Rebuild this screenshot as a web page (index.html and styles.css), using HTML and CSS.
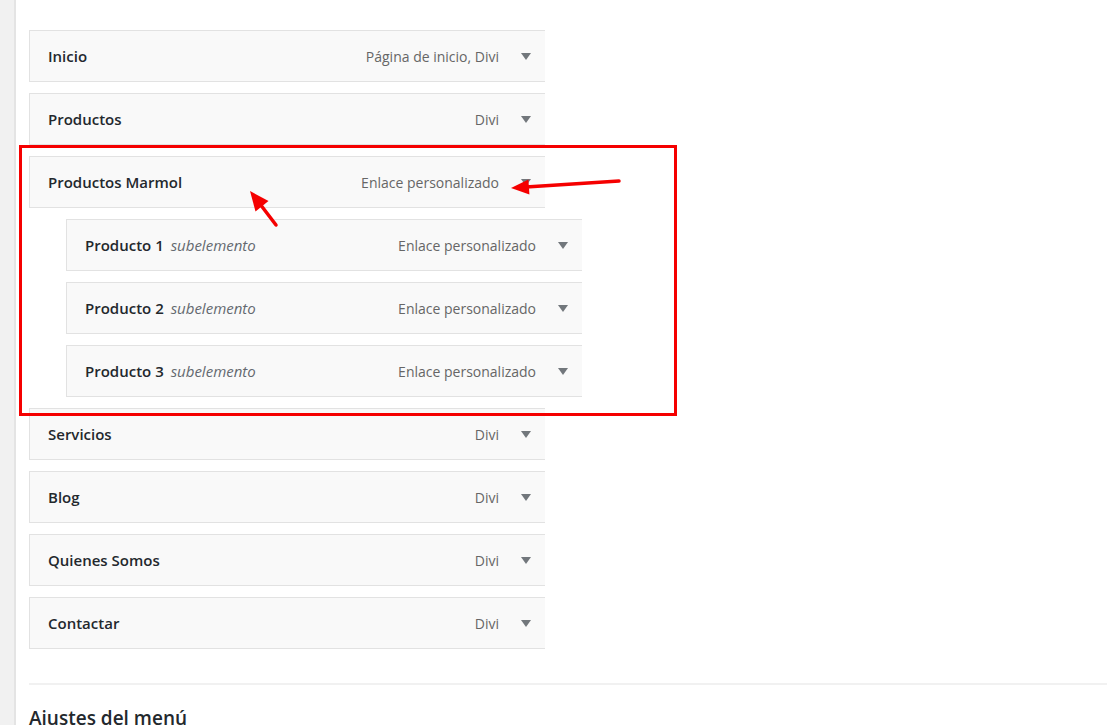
FILE: index.html
```html
<!DOCTYPE html>
<html lang="es">
<head>
  <meta charset="UTF-8" />
  <title>Menús</title>
  <link rel="stylesheet" href="styles.css">
</head>
<body>

  <div class="page">
    <!-- Admin side strip -->
    <div class="strip"></div>

    <!-- Menu structure -->
    <div class="main">
      <ul class="menu">
        <li class="item">
          <span class="title">Inicio</span>
          <span class="controls"><span class="type">Página de inicio, Divi</span><span class="caret"></span></span>
        </li>
        <li class="item">
          <span class="title">Productos</span>
          <span class="controls"><span class="type">Divi</span><span class="caret"></span></span>
        </li>
        <li class="item">
          <span class="title">Productos Marmol</span>
          <span class="controls"><span class="type">Enlace personalizado</span><span class="caret"></span></span>
        </li>
        <li class="item sub">
          <span class="title">Producto 1 <em>subelemento</em></span>
          <span class="controls"><span class="type">Enlace personalizado</span><span class="caret"></span></span>
        </li>
        <li class="item sub">
          <span class="title">Producto 2 <em>subelemento</em></span>
          <span class="controls"><span class="type">Enlace personalizado</span><span class="caret"></span></span>
        </li>
        <li class="item sub">
          <span class="title">Producto 3 <em>subelemento</em></span>
          <span class="controls"><span class="type">Enlace personalizado</span><span class="caret"></span></span>
        </li>
        <li class="item">
          <span class="title">Servicios</span>
          <span class="controls"><span class="type">Divi</span><span class="caret"></span></span>
        </li>
        <li class="item">
          <span class="title">Blog</span>
          <span class="controls"><span class="type">Divi</span><span class="caret"></span></span>
        </li>
        <li class="item">
          <span class="title">Quienes Somos</span>
          <span class="controls"><span class="type">Divi</span><span class="caret"></span></span>
        </li>
        <li class="item">
          <span class="title">Contactar</span>
          <span class="controls"><span class="type">Divi</span><span class="caret"></span></span>
        </li>
      </ul>

      <div class="settings">
        <h3>Ajustes del menú</h3>
      </div>
    </div>
  </div>

  <!-- Annotation drawn over the screenshot -->
  <svg class="notes" width="1107" height="725" viewBox="0 0 1107 725">
    <rect x="20.5" y="146.5" width="655" height="268" fill="none" stroke="#f50000" stroke-width="3"/>
    <line x1="619" y1="181" x2="526" y2="187" stroke="#f50000" stroke-width="3.5" stroke-linecap="round"/>
    <polygon points="511,188 529.4,194.5 528.4,179.5" fill="#f50000"/>
    <line x1="276" y1="225" x2="260" y2="204" stroke="#f50000" stroke-width="3.5" stroke-linecap="round"/>
    <polygon points="250,191 268.5,201 255.5,211.5" fill="#f50000"/>
  </svg>

</body>
</html>
```

FILE: styles.css
```css
body {
  margin: 0;
  background: #fff;
  font-family: "Open Sans", "Noto Sans", sans-serif;
  color: #23282d;
  overflow: hidden;
}

.page {
  display: flex;
  min-height: 725px;
}

.strip {
  width: 14px;
  flex-shrink: 0;
  background: #f1f1f1;
  border-right: 2px solid #e4e4e4;
}

.main {
  flex: 1;
  padding: 30px 0 0 13px;
}

.menu {
  list-style: none;
  margin: 0;
  padding: 0;
}

.item {
  width: 497px;
  height: 50px;
  margin-bottom: 11px;
  background: #f9f9f9;
  border: 1px solid #e2e2e2;
  border-right: none;
  display: flex;
  align-items: center;
  justify-content: space-between;
  padding: 0 0 0 18px;
}

.item.sub {
  margin-left: 37px;
}

.title {
  font-size: 15px;
  font-weight: 600;
  color: #23282d;
}

.title em {
  font-size: 15px;
  font-weight: 400;
  font-style: italic;
  color: #646970;
  margin-left: 3px;
}

.controls {
  display: flex;
  align-items: center;
}

.type {
  font-size: 14px;
  color: #666;
}

.caret {
  width: 0;
  height: 0;
  border-left: 5px solid transparent;
  border-right: 5px solid transparent;
  border-top: 7px solid #72777c;
  margin: 0 14px 0 22px;
}

.settings {
  margin-top: 34px;
  border-top: 2px solid #f1f1f1;
  padding-top: 20px;
}

.settings h3 {
  margin: 0;
  font-size: 19px;
  font-weight: 600;
  color: #23282d;
}

.notes {
  position: absolute;
  top: 0;
  left: 0;
  pointer-events: none;
}
```
